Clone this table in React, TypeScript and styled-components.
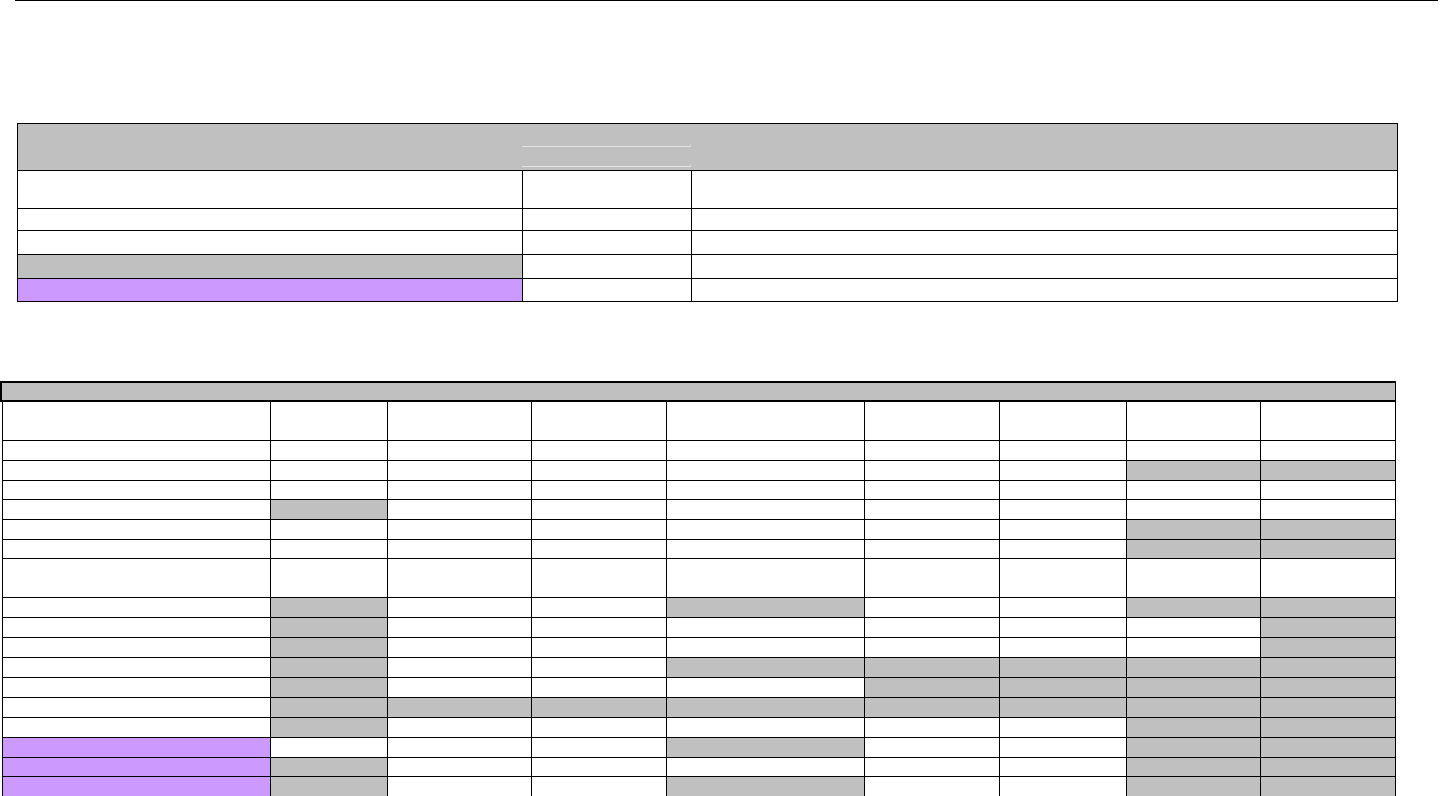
import styled, { createGlobalStyle } from "styled-components";

const GlobalStyle = createGlobalStyle`
    html, body {
        margin: 0;
        padding: 0;
        background: #fff;
        font-family: "Liberation Sans", Arial, sans-serif;
    }
`;

type Fill = "grey" | "purple" | undefined;

const colours: Record<string, string> = {
    grey: "#c0c0c0",
    purple: "#cc99ff",
};

const Page = styled.div`
    width: 1447px;
    display: flex;
    flex-direction: column;
    align-items: flex-start;
`;

const TopRule = styled.div`
    margin-left: 15px;
    width: 1423px;
    height: 1px;
    background: #000;
`;

const SummaryGrid = styled.div`
    margin: 122px 0 0 17px;
    display: grid;
    grid-template-columns: 504px 168px 705px;
    grid-template-rows: 46px 37px 21px 23px 23px 22px;
    gap: 1px;
    padding: 1px;
    background: #000;
`;

const Cell = styled.div<{ $fill?: Fill }>`
    background: ${(p) => (p.$fill ? colours[p.$fill] : "#fff")};
`;

const SummaryHeader = styled.div`
    grid-column: 1 / -1;
    background: #c0c0c0;
    display: grid;
    grid-template-columns: 504px 168px 1fr;
`;

const HeaderStack = styled.div`
    padding-top: 22px;
    display: flex;
    flex-direction: column;
`;

const GhostLine = styled.div`
    position: relative;
    height: 20px;
    border-top: 1px solid #e4e4e4;
    box-sizing: border-box;
    &::after {
        content: "";
        position: absolute;
        right: -1px;
        top: -3px;
        width: 1px;
        height: 3px;
        background: #d8d8d8;
    }
`;

const DetailBlock = styled.div`
    margin-top: 79px;
    display: flex;
    flex-direction: column;
`;

const DetailHeader = styled.div`
    width: 1396px;
    height: 21px;
    box-sizing: border-box;
    background: #c0c0c0;
    border: 2px solid #000;
    border-right-width: 1px;
`;

const DetailGrid = styled.div<{ $rows: string }>`
    margin-left: 2px;
    display: grid;
    grid-template-columns: 267px 116px 143px 134px 197px 134px 126px 133px 134px;
    grid-template-rows: ${(p) => p.$rows};
    gap: 1px;
    padding: 0 1px 1px 1px;
    background: #000;
`;

const summaryRows: Fill[][] = [
    [undefined, undefined, undefined],
    [undefined, undefined, undefined],
    [undefined, undefined, undefined],
    ["grey", undefined, undefined],
    ["purple", undefined, undefined],
];

// grey columns per row (1-based), purple marks the first column
const detailRows: { h: number; grey: number[]; purple?: boolean }[] = [
    { h: 38, grey: [] },
    { h: 19, grey: [] },
    { h: 19, grey: [8, 9] },
    { h: 18, grey: [] },
    { h: 19, grey: [2] },
    { h: 19, grey: [8, 9] },
    { h: 18, grey: [8, 9] },
    { h: 38, grey: [] },
    { h: 19, grey: [2, 5, 8, 9] },
    { h: 19, grey: [2, 9] },
    { h: 19, grey: [2, 9] },
    { h: 19, grey: [2, 5, 6, 7, 8, 9] },
    { h: 19, grey: [2, 6, 7, 8, 9] },
    { h: 19, grey: [2, 3, 4, 5, 6, 7, 8, 9] },
    { h: 19, grey: [2, 8, 9] },
    { h: 19, grey: [5, 8, 9], purple: true },
    { h: 18, grey: [2, 8, 9], purple: true },
    { h: 19, grey: [2, 5, 8, 9], purple: true },
];

export default function App() {
    const rowTemplate = detailRows.map((r) => `${r.h}px`).join(" ");
    return (
        <>
            <GlobalStyle />
            <Page>
                <TopRule />
                <SummaryGrid>
                    <SummaryHeader>
                        <div />
                        <HeaderStack>
                            <GhostLine />
                            <GhostLine />
                        </HeaderStack>
                        <div />
                    </SummaryHeader>
                    {summaryRows.map((row, i) =>
                        row.map((fill, j) => (
                            <Cell key={`s${i}-${j}`} $fill={fill} />
                        ))
                    )}
                </SummaryGrid>
                <DetailBlock>
                    <DetailHeader />
                    <DetailGrid $rows={rowTemplate}>
                        {detailRows.map((row, i) =>
                            Array.from({ length: 9 }, (_, j) => {
                                const col = j + 1;
                                let fill: Fill;
                                if (col === 1 && row.purple) fill = "purple";
                                else if (row.grey.includes(col)) fill = "grey";
                                return <Cell key={`d${i}-${j}`} $fill={fill} />;
                            })
                        )}
                    </DetailGrid>
                </DetailBlock>
            </Page>
        </>
    );
}
